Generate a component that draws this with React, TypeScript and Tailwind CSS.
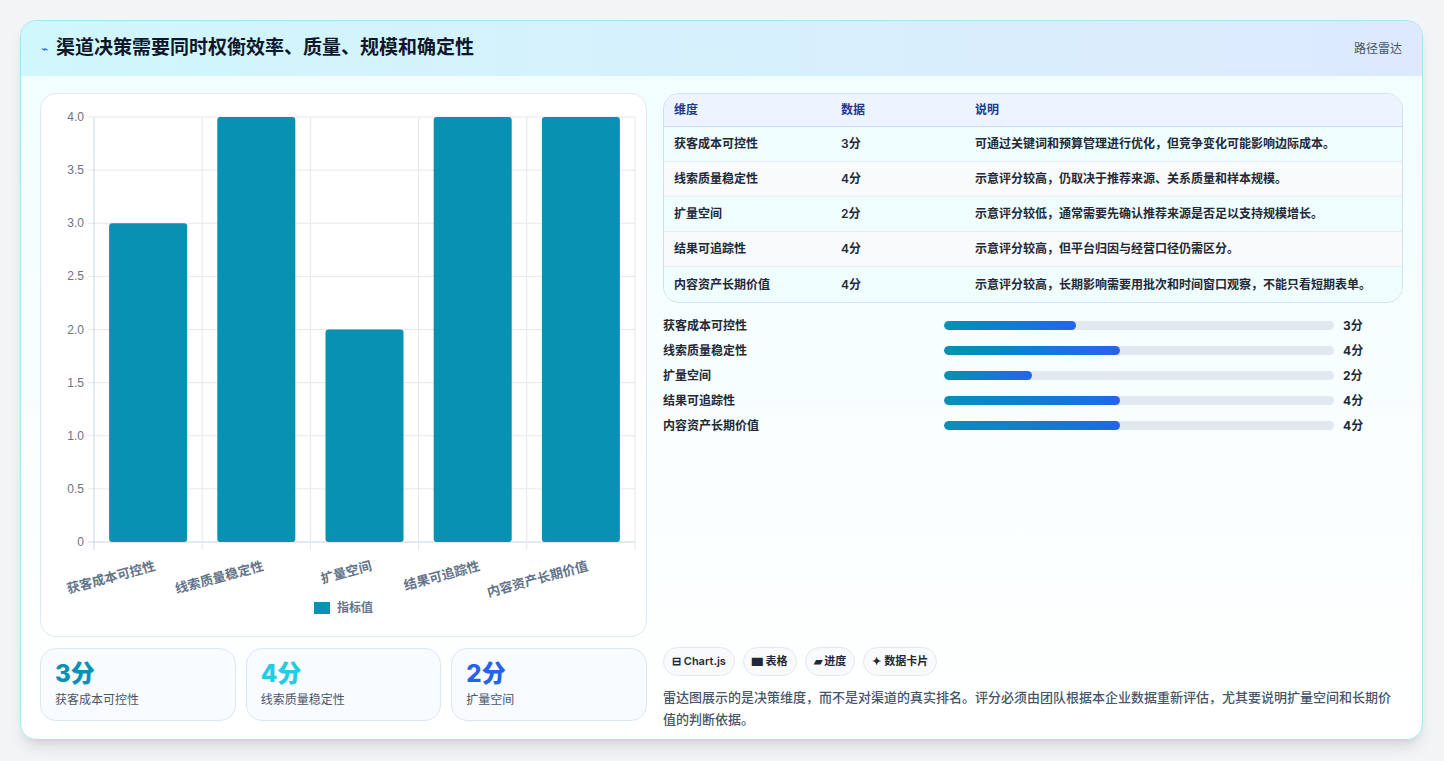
import React from "react";

const dims = [
  { n: "获客成本可控性", v: 3, d: "可通过关键词和预算管理进行优化，但竞争变化可能影响边际成本。" },
  { n: "线索质量稳定性", v: 4, d: "示意评分较高，仍取决于推荐来源、关系质量和样本规模。" },
  { n: "扩量空间", v: 2, d: "示意评分较低，通常需要先确认推荐来源是否足以支持规模增长。" },
  { n: "结果可追踪性", v: 4, d: "示意评分较高，但平台归因与经营口径仍需区分。" },
  { n: "内容资产长期价值", v: 4, d: "示意评分较高，长期影响需要用批次和时间窗口观察，不能只看短期表单。" },
];

function Chart() {
  const x0 = 53, x1 = 594, yTop = 23, y0 = 448;
  const unit = (y0 - yTop) / 4;
  const cw = (x1 - x0) / 5;
  const ticks = [0, 0.5, 1, 1.5, 2, 2.5, 3, 3.5, 4];
  return (
    <svg width="606" height="543" className="block" style={{ fontFamily: "'Liberation Sans','Noto Sans CJK SC',sans-serif" }}>
      {ticks.map((t) => {
        const y = y0 - t * unit;
        return (
          <g key={t}>
            <line x1={x0 - 6} x2={x1} y1={y} y2={y} stroke={t === 0 ? "#cbd5e1" : "#e5e7eb"} />
            <text x={x0 - 10} y={y + 4} textAnchor="end" fontSize="12" fill="#6b7280">{t === 0 ? "0" : t.toFixed(1)}</text>
          </g>
        );
      })}
      {[0, 1, 2, 3, 4, 5].map((i) => (
        <line key={i} x1={x0 + i * cw} x2={x0 + i * cw} y1={yTop} y2={y0 + 8} stroke={i === 0 ? "#cbd5e1" : "#e5e7eb"} />
      ))}
      {dims.map((d, i) => {
        const bw = 78;
        const bx = x0 + i * cw + (cw - bw) / 2;
        const by = y0 - d.v * unit;
        const cx = x0 + i * cw + cw / 2;
        return (
          <g key={d.n}>
            <rect x={bx} y={by} width={bw} height={y0 - by} rx="3" fill="#0891b2" />
            <text x={cx + 8} y={y0 + 28} textAnchor="end" fontSize="13" fontWeight="700" fill="#64748b"
              transform={`rotate(-15 ${cx + 8} ${y0 + 28})`}>{d.n}</text>
          </g>
        );
      })}
      <rect x="273" y="508" width="16" height="12" fill="#0891b2" />
      <text x="296" y="518" fontSize="12" fontWeight="700" fill="#64748b">指标值</text>
    </svg>
  );
}

export default function App() {
  const font = { fontFamily: "Inter,'Noto Sans CJK SC',sans-serif" };
  return (
    <div className="w-[1444px] h-[761px] bg-[#f3f4f6] pt-[20px] pl-[20px]" style={font}>
      <div className="w-[1403px] h-[720px] rounded-2xl border border-[#a5e6f0] overflow-hidden bg-gradient-to-b from-[#f0fdff] to-white shadow-lg">
        <div className="h-[55px] flex items-center justify-between px-[20px] bg-gradient-to-r from-[#cff7fc] to-[#dde9fd]">
          <div className="flex items-center gap-2">
            <span className="text-[#2563eb] text-[12px]">⌁</span>
            <span className="text-[19px] font-bold text-[#0f172a]">渠道决策需要同时权衡效率、质量、规模和确定性</span>
          </div>
          <span className="text-[12px] text-[#475569]">路径雷达</span>
        </div>
        <div className="flex gap-[16px] px-[19px] pt-[17px]">
          <div className="w-[607px] flex flex-col gap-[11px]">
            <div className="h-[544px] rounded-2xl border border-[#e2e8f0] bg-white overflow-hidden">
              <Chart />
            </div>
            <div className="grid grid-cols-3 gap-[10px]">
              {[
                ["3分", "获客成本可控性", "text-[#0891b2]"],
                ["4分", "线索质量稳定性", "text-[#22cbe6]"],
                ["2分", "扩量空间", "text-[#2563eb]"],
              ].map(([v, l, c]) => (
                <div key={l} className="h-[73px] rounded-2xl border border-[#dbe7f5] bg-[#f8fbff] px-[14px] pt-[10px]">
                  <div className={`text-[24px] font-extrabold leading-[30px] ${c}`}>{v}</div>
                  <div className="text-[12px] text-[#475569] mt-[2px]">{l}</div>
                </div>
              ))}
            </div>
          </div>
          <div className="w-[743px] flex flex-col">
            <div className="rounded-2xl border border-[#cfe0ee] overflow-hidden text-[12px]">
              <div className="flex h-[33px] items-center bg-[#eef4ff] border-b border-[#cfdcec] font-bold text-[#1e3a8a]">
                <div className="w-[177px] pl-[10px]">维度</div>
                <div className="w-[134px]">数据</div>
                <div>说明</div>
              </div>
              {dims.map((d, i) => (
                <div key={d.n} className={`flex h-[35px] items-center font-semibold text-[#1f2937] ${i < 4 ? "border-b border-[#e5eef3]" : ""} ${i % 2 === 0 ? "bg-[#f0fdff]" : "bg-[#f8fafc]"}`}>
                  <div className="w-[177px] pl-[10px]">{d.n}</div>
                  <div className="w-[134px]">{d.v}分</div>
                  <div>{d.d}</div>
                </div>
              ))}
            </div>
            <div className="mt-[10px] flex flex-col">
              {dims.map((d) => (
                <div key={d.n} className="h-[25px] flex items-center text-[12px] font-semibold text-[#1f2937]">
                  <div className="w-[281px]">{d.n}</div>
                  <div className="w-[390px] h-[9px] rounded-full bg-[#e2e8f0] overflow-hidden">
                    <div className="h-full rounded-full bg-gradient-to-r from-[#0891b2] to-[#2563eb]" style={{ width: `${d.v * 11.25}%` }} />
                  </div>
                  <div className="ml-[9px] font-bold">{d.v}分</div>
                </div>
              ))}
            </div>
            <div className="mt-[209px] flex gap-[8px] text-[11px] font-semibold text-[#1f2937]">
              {["⊟ Chart.js", "▆ 表格", "▰ 进度", "✦ 数据卡片"].map((t) => (
                <div key={t} className="h-[29px] px-[8px] flex items-center rounded-full border border-[#e2e8f0] bg-[#f8fafc]">{t}</div>
              ))}
            </div>
            <p className="mt-[10px] text-[13px] leading-[22px] text-[#475569] font-medium">雷达图展示的是决策维度，而不是对渠道的真实排名。评分必须由团队根据本企业数据重新评估，尤其要说明扩量空间和长期价值的判断依据。</p>
          </div>
        </div>
      </div>
    </div>
  );
}
